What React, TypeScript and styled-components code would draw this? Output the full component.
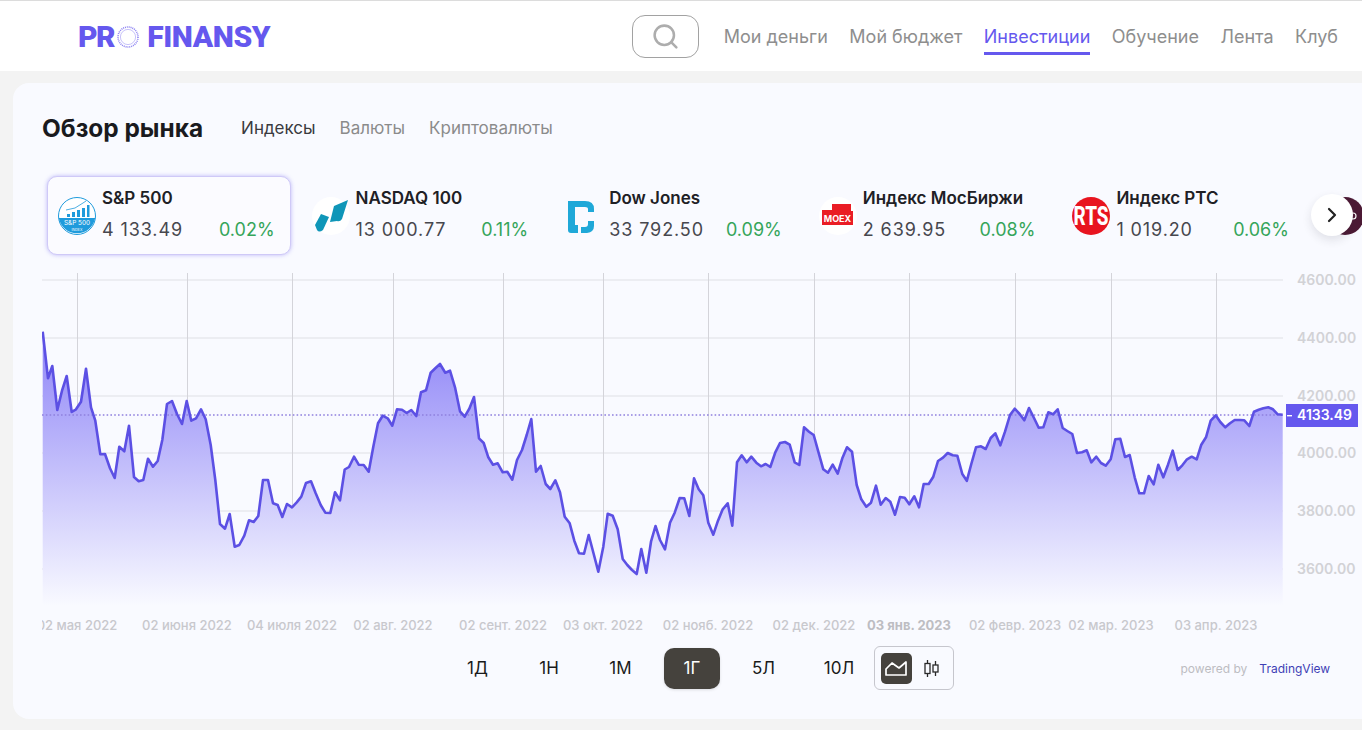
import React from "react"
import styled, { createGlobalStyle } from "styled-components"
import { Search, ChevronRight } from "lucide-react"

const GlobalStyle = createGlobalStyle`
  html, body {
    margin: 0;
    height: 730px;
    overflow: hidden;
    background: #f3f3f3;
    font-family: "Inter", "Liberation Sans", sans-serif;
  }
`

const PURPLE = "#6558ee"

const Page = styled.div`
  height: 730px;
  display: flex;
  flex-direction: column;
`

const Header = styled.header`
  height: 70px;
  flex: none;
  display: flex;
  align-items: center;
  background: #fff;
  border-top: 1px solid #dcdcdc;
  padding: 0 24px 0 78px;
`

const Logo = styled.div`
  display: flex;
  align-items: center;
  padding-top: 1px;
  font-family: "Roboto", sans-serif;
  font-weight: 900;
  font-size: 30px;
  letter-spacing: -0.4px;
  line-height: 1;
  color: ${PURPLE};
  svg {
    margin: 0 8px 0 3px;
  }
`

const LogoPrefix = styled.span`
  letter-spacing: -1.5px;
`

const Nav = styled.nav`
  margin-left: auto;
  display: flex;
  align-items: center;
  gap: 21.5px;
`

const SearchButton = styled.button`
  width: 67px;
  height: 43px;
  margin-right: 3px;
  display: flex;
  align-items: center;
  justify-content: center;
  background: #fff;
  border: 1px solid #a2a2a2;
  border-radius: 13px;
  color: #adadad;
`

const NavLink = styled.a<{ $active?: boolean }>`
  position: relative;
  font-size: 18px;
  line-height: 24px;
  color: ${p => (p.$active ? PURPLE : "#8e8e8e")};
  padding-bottom: 3px;
  border-bottom: 3px solid ${p => (p.$active ? PURPLE : "transparent")};
  margin-top: 8px;
`

const Card = styled.main`
  margin: 12px 0 0 13px;
  height: 636px;
  flex: none;
  background: #f9faff;
  border-radius: 16px 0 0 16px;
  display: flex;
  flex-direction: column;
`

const TitleRow = styled.div`
  height: 30px;
  margin-top: 30px;
  padding-left: 29px;
  display: flex;
  align-items: center;
`

const Title = styled.h1`
  margin: 0 38px 0 0;
  font-size: 24.4px;
  font-weight: 700;
  color: #1a1a1e;
`

const Tab = styled.a<{ $active?: boolean }>`
  font-size: 17px;
  margin-right: 24px;
  color: ${p => (p.$active ? "#3a3a40" : "#8b8b8b")};
`

const StripWrap = styled.div`
  position: relative;
  overflow: hidden;
  margin-top: 27px;
  padding: 6px 0 6px 34px;
`

const Strip = styled.div`
  display: flex;
  gap: 10px;
  width: max-content;
`

const Item = styled.div<{ $active?: boolean }>`
  width: 243.6px;
  height: 79px;
  box-sizing: border-box;
  padding: 9px 15px 0 10px;
  display: flex;
  gap: 6px;
  border-radius: 10px;
  border: 1px solid ${p => (p.$active ? "#cfc9f7" : "transparent")};
  background: ${p => (p.$active ? "#fbfbff" : "transparent")};
  box-shadow: ${p => (p.$active ? "0 0 4px rgba(101, 88, 238, 0.4)" : "none")};
`

const ItemLogo = styled.div`
  width: 38px;
  height: 38px;
  flex: none;
  margin-top: 11px;
`

const ItemBody = styled.div`
  flex: 1;
  min-width: 0;
`

const ItemName = styled.div`
  font-size: 17px;
  font-weight: 600;
  line-height: 24px;
  color: #202025;
`

const ItemValues = styled.div`
  display: flex;
  justify-content: space-between;
  margin-top: 8px;
  font-size: 18px;
  line-height: 24px;
  letter-spacing: 0.9px;
  color: #47474e;
`

const Change = styled.span`
  letter-spacing: 0;
  color: #35a55a;
`

const NextButton = styled.button`
  position: absolute;
  left: 1298px;
  top: 24px;
  width: 42px;
  height: 42px;
  padding: 0;
  display: flex;
  align-items: center;
  justify-content: center;
  border: none;
  border-radius: 50%;
  background: #fff;
  color: #222;
  box-shadow: 0 4px 10px rgba(40, 40, 60, 0.12);
`

const ChartBox = styled.div`
  margin-top: 9px;
  height: 366px;
  flex: none;
  margin-left: 29px;
  svg {
    display: block;
  }
  text {
    font-family: "Inter", "Liberation Sans", sans-serif;
  }
`

const Footer = styled.div`
  margin-top: 10px;
  padding-left: 436.5px;
  display: flex;
  align-items: center;
  height: 44px;
`

const RangeButton = styled.button<{ $active?: boolean; $wide?: boolean }>`
  width: ${p => (p.$wide ? 64 : 56)}px;
  height: 41px;
  margin-right: ${p => (p.$wide ? 3 : 15.5)}px;
  padding: 0;
  border: none;
  border-radius: 10px;
  font-family: inherit;
  font-size: 17px;
  color: ${p => (p.$active ? "#fff" : "#1a1a1a")};
  background: ${p => (p.$active ? "#45423d" : "transparent")};
  box-shadow: ${p => (p.$active ? "0 1px 3px rgba(0, 0, 0, 0.12)" : "none")};
`

const ChartToggle = styled.div`
  width: 80px;
  height: 44px;
  box-sizing: border-box;
  padding: 6px;
  display: flex;
  align-items: center;
  gap: 5px;
  border: 1px solid #c6c6cd;
  border-radius: 6px;
`

const ToggleButton = styled.div<{ $active?: boolean }>`
  width: 31px;
  height: 31px;
  display: flex;
  align-items: center;
  justify-content: center;
  border-radius: 5px;
  background: ${p => (p.$active ? "#45423d" : "transparent")};
`

const Powered = styled.span`
  margin-left: 226.5px;
  font-size: 12px;
  color: #bdbdc2;
`

const Vendor = styled.a`
  margin-left: 12px;
  font-size: 12px;
  color: #3f3fb5;
`

const LINE = `42.7,331.7 48,378.3 52.3,366 57.3,410 62,390.7 66.7,376 71.7,412 76,409.3 81,401.7 86,368.7 91,407.3 95.3,420.7 100.3,454.3 105,454 110,468.3 114.7,478 119.3,446.7 124.3,451.3 129,425.7 134,477 138.7,481.3 143.3,480 148,458.7 153,466.7 157.7,461 162.3,440 167,404 172,401 177,414 182,424 186.7,401 191.3,420.7 196,418.3 201,409.3 205.7,419.3 210.7,445 215.3,480 220,524 225,528.7 229.7,514 234.7,546.7 239.3,545 244.3,535.7 249,520.3 253.7,522 258.3,516 263,480 268,480 273,503.3 277.7,505 282.3,517 287,504 292,507.3 296.7,502.3 301.3,496.7 306,483 311,481.3 315.7,493.3 320.7,505 325.3,512.7 330.3,513 335,492.3 340,500.3 344.7,469.5 349,467 354,456.7 358.7,464.7 363.7,465 368.7,471.7 373.3,446.7 378,423.3 382.7,415.7 387.7,418.3 392.3,425.7 397,409.3 402,409.7 406.7,413 411.3,410 416.3,416 421,392.3 426,390.3 430.7,372.7 435.3,368.3 440,364 445.3,372.7 450,370.7 455,387.3 460,411.3 464.7,416.7 469.3,408.7 474,397 479,438.3 483.7,443 488.3,457.3 493,464.7 497.7,463.3 502.7,472.3 507.3,471.7 512.3,479.7 517,460 522,450 526.7,435 531.3,419 536,471.7 540.7,466 545.7,484 550.3,489 555.3,480.3 560,492.3 564.7,516.7 569.7,523.3 574.3,540.7 579,553.3 584,553.7 588.7,535 593.7,554 598.3,571.7 603.3,546.7 607.7,513.7 612.7,515.7 617.7,529.3 622.7,559 627.3,565 632,570 636.7,574 641.3,549 646.3,572.7 651,541.7 655.5,526 660,540 665,549.3 670,522.7 674.7,512.7 679.7,498 684.3,498.3 689.3,516 694,478.3 698.7,489.3 703.3,495.3 708.3,522.7 713.3,534.7 718,520.7 722.7,509.3 727.7,503.3 732.3,525.7 737,462.3 741.7,455.3 746.7,462.3 751.3,456.7 756.3,462.7 761,466.3 765.7,464 770.3,467 775.3,452.3 780,443 785,442 789.7,444.7 794.7,462.3 799.3,465 804,427.3 809,431.7 813.7,435 818.3,451.7 823.3,469.3 828,472.7 832.7,464.7 837.7,473.7 842.3,458.3 847,447.3 852,451.7 856.7,485 861.3,499.3 866.3,506.7 871,502.7 876,485.7 880.7,504.7 885.7,498 890.3,501.7 895,514.7 900,497 904.7,497.7 909.3,504.3 914.3,496.3 919,507.3 923.7,484 928.7,484 933.3,476.7 938,461 943,457.7 947.7,453 952.7,455.3 957.3,455.7 962.3,474 966.8,480.8 971.3,464 976,447.3 981,446.3 985.7,449 990.7,438 995.3,433.3 1000.3,445.3 1005,431.7 1010,415 1014.7,408.7 1019.7,414 1024.3,420.3 1029,408 1034,418 1038.7,427.7 1043.3,427.3 1048.3,412.3 1053,414.3 1057.7,409.3 1062.7,428 1067.3,431 1072.3,434 1077,453 1082,452.3 1086.7,450.3 1091.3,462.3 1096.3,456.7 1101,463 1105.7,465.7 1110.7,459.3 1115.3,439.3 1120.3,438.7 1125,457 1129.7,455 1134.7,477.3 1139.3,493.3 1144,493.3 1148.7,476 1153.7,484.3 1158.3,464.7 1163.3,477.3 1168,464.7 1172.7,450.7 1177.7,470 1182.3,465.3 1187,459.3 1191.7,456.7 1196.7,459.3 1201.3,444.7 1206,437.3 1210.7,420.7 1215.7,415.3 1220.3,422 1225.3,427.3 1230,423.3 1234.7,420 1239.7,420 1244.3,420.3 1249.3,426 1254,411.7 1258.7,409.7 1263.3,408.3 1268.3,407.3 1273,409.3 1277.7,414.3 1282.7,414.7`

const PRICE_LEVELS = [
  { y: 280, label: "4600.00" },
  { y: 338, label: "4400.00" },
  { y: 396, label: "4200.00" },
  { y: 453, label: "4000.00" },
  { y: 511, label: "3800.00" },
  { y: 569, label: "3600.00" },
]

const DATES = [
  { x: 77, label: "02 мая 2022" },
  { x: 187, label: "02 июня 2022" },
  { x: 292, label: "04 июля 2022" },
  { x: 393, label: "02 авг. 2022" },
  { x: 503, label: "02 сент. 2022" },
  { x: 603, label: "03 окт. 2022" },
  { x: 708, label: "02 нояб. 2022" },
  { x: 814, label: "02 дек. 2022" },
  { x: 909, label: "03 янв. 2023", bold: true },
  { x: 1015, label: "02 февр. 2023" },
  { x: 1111, label: "02 мар. 2023" },
  { x: 1216, label: "03 апр. 2023" },
]

const LogoRing = () => (
  <svg width="22" height="22" viewBox="0 0 22 22">
    <circle cx="11" cy="11" r="10" fill="none" stroke={PURPLE} strokeWidth="1.6" strokeDasharray="1 0.9" opacity="0.75" />
    <circle cx="11" cy="11" r="7.6" fill="none" stroke={PURPLE} strokeWidth="0.6" opacity="0.6" />
  </svg>
)

const SpLogo = () => (
  <svg width="38" height="38" viewBox="0 0 38 38">
    <circle cx="19" cy="19" r="18.5" fill="#fff" stroke="#1f9bdc" />
    <path d="M0.8 21 H37.2 A18.5 18.5 0 0 1 0.8 21 Z" fill="#1f9bdc" />
    <path d="M9 20v-3h3v3zM14 20v-5h3v5zM19 20v-7h3v7zM24 20v-9h3v9zM29 20V8h2.5v12z" fill="#1f9bdc" />
    <path d="M8 13 L17 11 L25 6 L28 4" fill="none" stroke="#1f9bdc" strokeWidth="0.8" />
    <text x="19" y="28" textAnchor="middle" fontSize="6.4" fill="#fff" fontFamily="Inter, sans-serif">S&amp;P 500</text>
    <text x="19" y="33.5" textAnchor="middle" fontSize="3.6" fill="#fff" fontFamily="Inter, sans-serif">INDEX</text>
  </svg>
)

const NasdaqLogo = () => (
  <svg width="38" height="38" viewBox="0 0 38 38">
    <circle cx="19" cy="19" r="19" fill="#fff" />
    <path d="M3 28 L9 17 L17 20 L11 33 Q7 36 5 33 Z" fill="#0f96b8" />
    <path d="M22 9 L36 3 L30 22 Q28 25 25 24 L18 25 Z" fill="#0f96b8" />
  </svg>
)

const DowLogo = () => (
  <svg width="38" height="38" viewBox="0 0 38 38" fill="#1fa8d8">
    <path d="M3 4 H20 Q29 4 29 12 V15 H23 V12 Q23 10 20 10 H10 V28 H13 V36 H6 Q3 36 3 33 Z" />
    <path d="M29 24 V29 Q29 35 22 36 H16 V30 H20 Q23 30 23 27 V24 Z" />
  </svg>
)

const MoexLogo = () => (
  <svg width="38" height="38" viewBox="0 0 38 38">
    <circle cx="19" cy="19" r="19" fill="#fff" />
    <path d="M3 13 H13 V7 H32 V14 H34 V28 H3 Z" fill="#ea1d25" />
    <text x="18.5" y="24.5" textAnchor="middle" fontSize="9" fontWeight="700" fill="#fff" fontFamily="Inter, sans-serif">MOEX</text>
  </svg>
)

const RtsLogo = () => (
  <svg width="38" height="38" viewBox="0 0 38 38">
    <circle cx="19" cy="19" r="19" fill="#e8141f" />
    <text x="19" y="28" textAnchor="middle" fontSize="25" fontWeight="800" fill="#fff" textLength="35" lengthAdjust="spacingAndGlyphs" fontFamily="Roboto, sans-serif">RTS</text>
  </svg>
)

const NextLogo = () => (
  <svg width="38" height="38" viewBox="0 0 38 38">
    <circle cx="19" cy="19" r="19" fill="#4c1a35" />
    <circle cx="27" cy="19" r="3" fill="none" stroke="#fff" strokeWidth="1.2" />
  </svg>
)

const AreaIcon = () => (
  <svg width="24" height="18" viewBox="0 0 24 18" fill="none" stroke="#fff" strokeWidth="1.7" strokeLinejoin="round">
    <path d="M2 16 V10 L8 4 L15 9 L22 3 V16 Z" />
  </svg>
)

const CandleIcon = () => (
  <svg width="15" height="19" viewBox="0 0 15 19" fill="none" stroke="#2a2a2a" strokeWidth="1.3">
    <path d="M3.5 1v17M11.5 2v15" />
    <rect x="1" y="4.5" width="5" height="10" fill="#f9faff" />
    <rect x="9" y="6" width="5" height="7" fill="#f9faff" />
  </svg>
)

const INDICES = [
  { name: "S&P 500", value: "4 133.49", change: "0.02%", icon: <SpLogo />, active: true },
  { name: "NASDAQ 100", value: "13 000.77", change: "0.11%", icon: <NasdaqLogo /> },
  { name: "Dow Jones", value: "33 792.50", change: "0.09%", icon: <DowLogo /> },
  { name: "Индекс МосБиржи", value: "2 639.95", change: "0.08%", icon: <MoexLogo /> },
  { name: "Индекс РТС", value: "1 019.20", change: "0.06%", icon: <RtsLogo /> },
  { name: "", value: "", change: "", icon: <NextLogo /> },
]

const RANGES = ["1Д", "1Н", "1М", "1Г", "5Л", "10Л"]

const NAV = ["Мои деньги", "Мой бюджет", "Инвестиции", "Обучение", "Лента", "Клуб"]

const MarketChart = () => {
  const firstX = LINE.split(",")[0]
  const area = `${LINE} 1282.7,606 ${firstX},606`

  return (
    <svg width="1320" height="366" viewBox="42 270 1320 366">
      <defs>
        <linearGradient id="areaFill" gradientUnits="userSpaceOnUse" x1="0" y1="330" x2="0" y2="606">
          <stop offset="0" stopColor="#8d83f7" />
          <stop offset="1" stopColor="#f9faff" />
        </linearGradient>
      </defs>
      {PRICE_LEVELS.map(l => (
        <g key={l.label}>
          <line x1="42" x2="1283" y1={l.y} y2={l.y} stroke="#dfdfe5" strokeWidth="1.2" />
          <text x="1297" y={l.y + 5} fontSize="14" fontWeight="600" fill="#d2d2d6">{l.label}</text>
        </g>
      ))}
      {DATES.map(d => (
        <g key={d.label}>
          <line x1={d.x + 0.5} x2={d.x + 0.5} y1="273" y2="606" stroke="#d4d4da" />
          <text x={d.x} y="630" textAnchor="middle" fontSize="13" fontWeight={d.bold ? 700 : 500} fill={d.bold ? "#bdbdc2" : "#c8c8cd"}>{d.label}</text>
        </g>
      ))}
      <polygon points={area} fill="url(#areaFill)" />
      <line x1="42" x2="1283" y1="415" y2="415" stroke="#8f80de" strokeWidth="1.3" strokeDasharray="1.6 2.2" />
      <polyline points={LINE} fill="none" stroke="#5c50e4" strokeWidth="2.6" strokeLinejoin="round" />
      <rect x="1286" y="404" width="72" height="23" fill={PURPLE} />
      <rect x="1287" y="415" width="5" height="1.4" fill="#fff" />
      <text x="1297" y="420" fontSize="14" fontWeight="600" fill="#fff">4133.49</text>
    </svg>
  )
}

export default function App() {
  return (
    <Page>
      <GlobalStyle />
      <Header>
        <Logo>
          <LogoPrefix>PR</LogoPrefix>
          <LogoRing />
          FINANSY
        </Logo>
        <Nav>
          <SearchButton>
            <Search size={29} strokeWidth={2.1} />
          </SearchButton>
          {NAV.map(n => (
            <NavLink key={n} $active={n === "Инвестиции"}>{n}</NavLink>
          ))}
        </Nav>
      </Header>
      <Card>
        <TitleRow>
          <Title>Обзор рынка</Title>
          <Tab $active>Индексы</Tab>
          <Tab>Валюты</Tab>
          <Tab>Криптовалюты</Tab>
        </TitleRow>
        <StripWrap>
          <Strip>
            {INDICES.map((item, i) => (
              <Item key={i} $active={item.active}>
                <ItemLogo>{item.icon}</ItemLogo>
                <ItemBody>
                  <ItemName>{item.name}</ItemName>
                  <ItemValues>
                    <span>{item.value}</span>
                    <Change>{item.change}</Change>
                  </ItemValues>
                </ItemBody>
              </Item>
            ))}
          </Strip>
          <NextButton>
            <ChevronRight size={24} strokeWidth={2.2} />
          </NextButton>
        </StripWrap>
        <ChartBox>
          <MarketChart />
        </ChartBox>
        <Footer>
          {RANGES.map(r => (
            <RangeButton key={r} $active={r === "1Г"} $wide={r === "10Л"}>{r}</RangeButton>
          ))}
          <ChartToggle>
            <ToggleButton $active><AreaIcon /></ToggleButton>
            <ToggleButton><CandleIcon /></ToggleButton>
          </ChartToggle>
          <Powered>powered by</Powered>
          <Vendor>TradingView</Vendor>
        </Footer>
      </Card>
    </Page>
  )
}
